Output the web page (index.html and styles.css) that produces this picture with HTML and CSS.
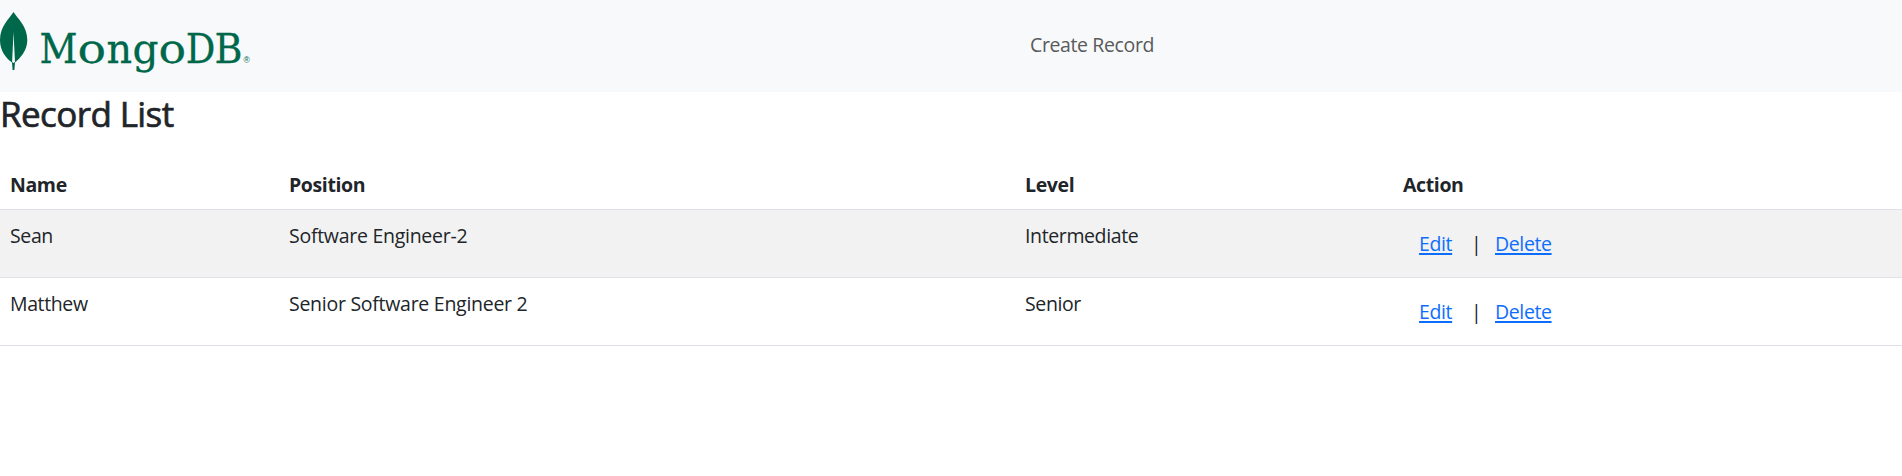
FILE: index.html
```html
<!DOCTYPE html>
<html lang="en">
<head>
<meta charset="utf-8">
<title>Record List</title>
<link rel="stylesheet" href="styles.css">
</head>
<body>
<nav class="navbar">
  <a class="brand" href="#" aria-label="MongoDB">
    <svg class="logo" width="252" height="92" viewBox="0 0 252 92">
      <path d="M13.5 12C17 18 27.3 26 27.3 40C27.3 51 20 58 15 62.5L14.4 70H12.6L12 62.5C6 58 0 51 0 40C0 26 10 18 13.5 12Z" fill="#00684a"/>
      <path d="M13.5 32L15 62L13.6 63L12.1 62Z" fill="#f8f9fa"/>
      <text class="wordmark" y="62.8"><tspan x="39.5" textLength="38" lengthAdjust="spacingAndGlyphs">M</tspan><tspan x="77.6" textLength="28.6" lengthAdjust="spacingAndGlyphs">o</tspan><tspan x="106.4" textLength="25.6" lengthAdjust="spacingAndGlyphs">n</tspan><tspan x="132.6" textLength="26" lengthAdjust="spacingAndGlyphs">g</tspan><tspan x="158.6" textLength="27.6" lengthAdjust="spacingAndGlyphs">o</tspan><tspan x="185.8" textLength="29.6" lengthAdjust="spacingAndGlyphs">D</tspan><tspan x="214.6" textLength="28" lengthAdjust="spacingAndGlyphs">B</tspan></text>
      <text class="mark" x="243.5" y="63">®</text>
    </svg>
  </a>
  <a class="nav-link" href="#">Create Record</a>
</nav>
<main>
  <h3 class="title">Record List</h3>
  <table class="table">
    <colgroup><col class="col-name"><col class="col-position"><col class="col-level"><col></colgroup>
    <thead>
      <tr><th>Name</th><th>Position</th><th>Level</th><th>Action</th></tr>
    </thead>
    <tbody>
      <tr class="striped">
        <td>Sean</td><td class="position">Software Engineer-2</td><td>Intermediate</td>
        <td><div class="actions"><a class="edit" href="#">Edit</a><span class="divider">|</span><a class="delete" href="#">Delete</a></div></td>
      </tr>
      <tr>
        <td>Matthew</td><td class="position">Senior Software Engineer 2</td><td>Senior</td>
        <td><div class="actions"><a class="edit" href="#">Edit</a><span class="divider">|</span><a class="delete" href="#">Delete</a></div></td>
      </tr>
    </tbody>
  </table>
</main>
</body>
</html>
```
FILE: styles.css
```css
* { box-sizing: border-box; }
body {
  margin: 0;
  background: #fff;
  color: #212529;
  font: 19.5px/30px "Segoe UI", "Open Sans", sans-serif;
  letter-spacing: -0.38px;
}
.navbar {
  display: flex;
  align-items: center;
  height: 92px;
  background: #f8f9fa;
}
.brand { display: block; width: 1030px; height: 92px; }
.logo { display: block; }
.wordmark {
  font: 41.5px "DejaVu Serif", serif;
  letter-spacing: 0;
  fill: #00684a;
  stroke: #00684a;
  stroke-width: 0.3px;
}
.mark { font: 8.5px "Liberation Sans", sans-serif; letter-spacing: 0; fill: #00684a; }
.nav-link { padding-bottom: 2px; color: #595a5b; text-decoration: none; }
.title {
  margin: 0;
  padding-top: 1px;
  height: 70px;
  font-size: 35px;
  font-weight: 500;
  line-height: 42px;
  letter-spacing: -0.6px;
  -webkit-text-stroke: 0.7px #212529;
}
.table {
  width: 100%;
  table-layout: fixed;
  border-collapse: separate;
  border-spacing: 0;
}
.col-name { width: 279px; }
.col-position { width: 736px; }
.col-level { width: 378px; }
th, td {
  padding: 11px 10px 9px;
  text-align: left;
  vertical-align: top;
  border-bottom: 1px solid #dee2e6;
}
th { height: 48px; padding-top: 8px; padding-bottom: 9px; }
td { height: 68px; }
.position { letter-spacing: -0.27px; }
.striped td { background: #f2f2f2; }
.actions { display: flex; padding: 8px 0 0 16px; }
.actions a { color: #0d6efd; text-decoration-thickness: 2px; text-underline-offset: 2px; }
.edit { width: 52px; }
.divider { width: 24px; }
```
